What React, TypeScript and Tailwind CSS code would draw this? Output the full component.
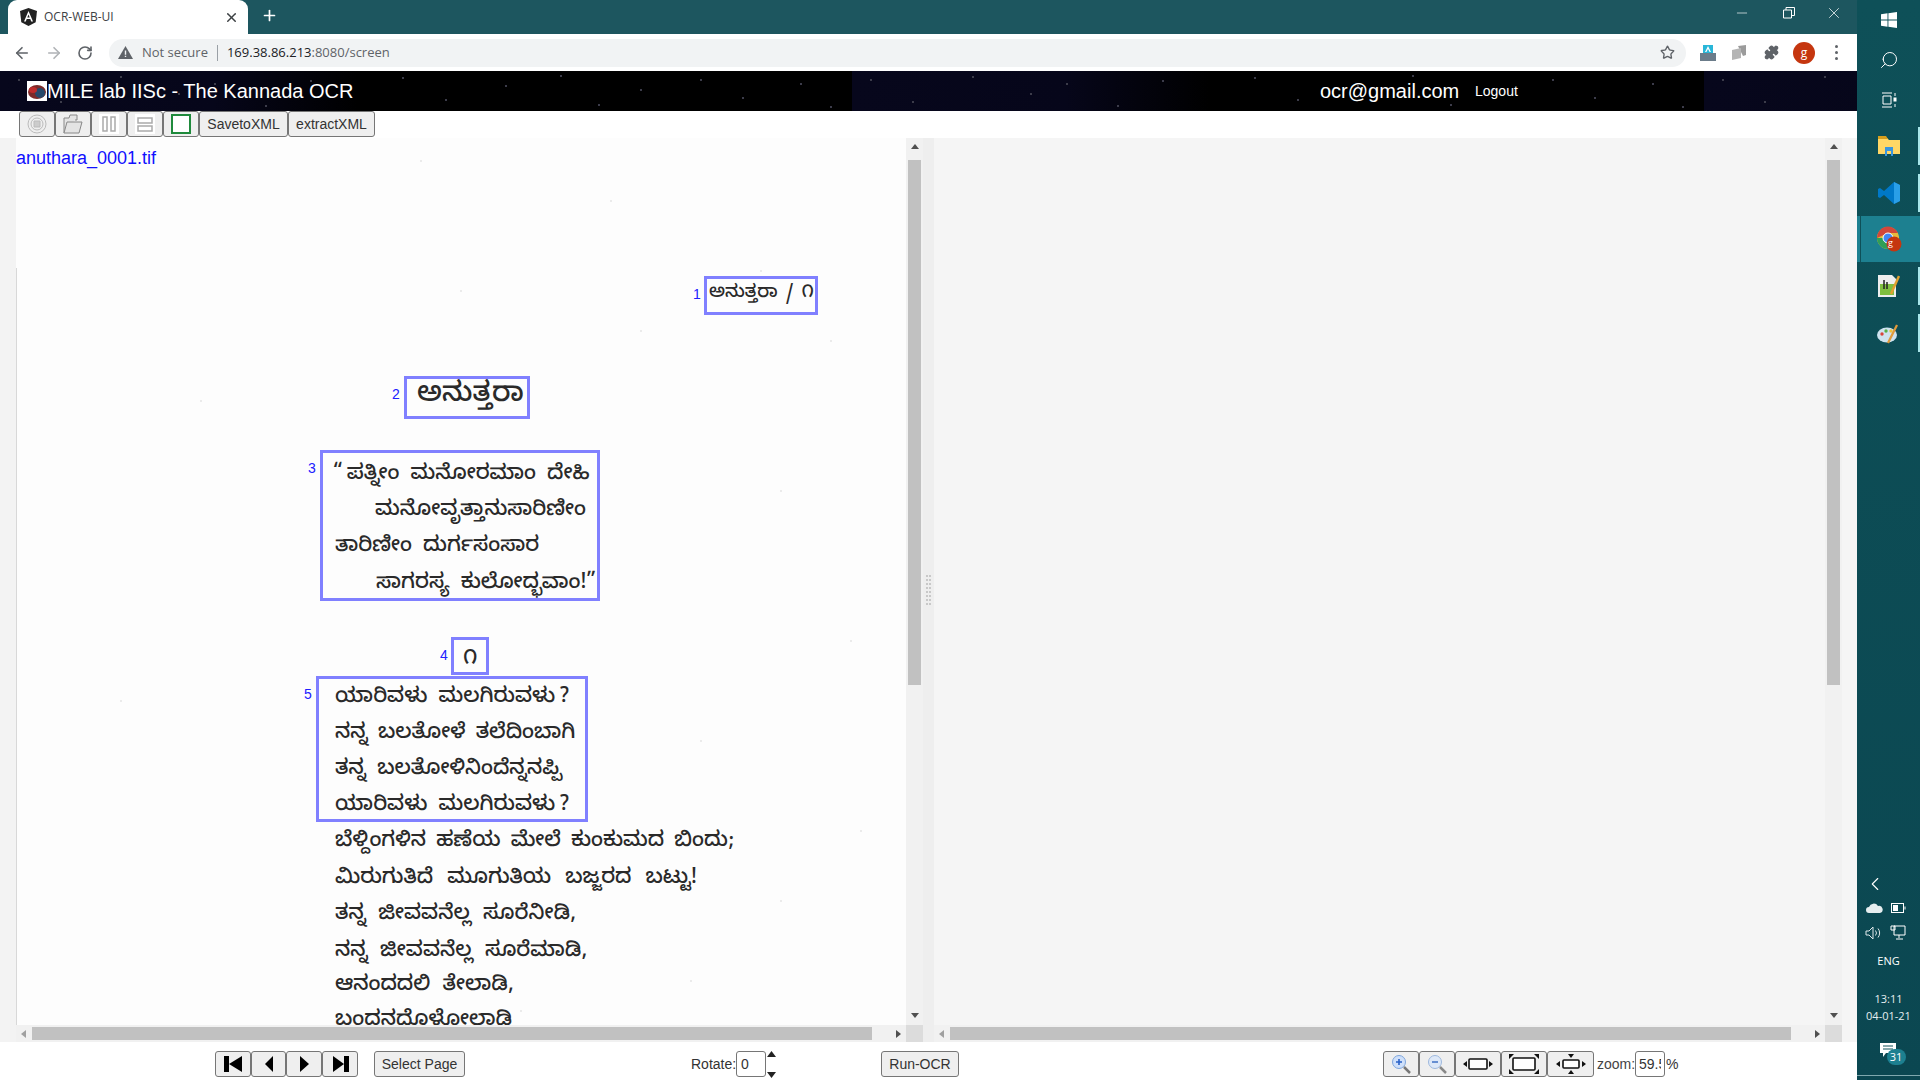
import type { ReactNode } from 'react';
import { ChevronLeft, Minus, Plus, RotateCw, Search, Star, X, ArrowLeft, ArrowRight, Puzzle } from 'lucide-react';

const pageLines = [
  { left: 709, y: 295, size: 18, gap: 2, text: 'ಅನುತ್ತರಾ / ೧' },
  { left: 417, y: 397, size: 28, gap: 0, text: 'ಅನುತ್ತರಾ' },
  { left: 333, y: 476, size: 21, gap: 5, text: '“\u2009ಪತ್ನೀಂ ಮನೋರಮಾಂ ದೇಹಿ' },
  { left: 375, y: 512, size: 21, gap: 0, text: 'ಮನೋವೃತ್ತಾನುಸಾರಿಣೀಂ' },
  { left: 335, y: 548, size: 21, gap: 5, text: 'ತಾರಿಣೀಂ ದುರ್ಗಸಂಸಾರ' },
  { left: 376, y: 585, size: 21, gap: 5, text: 'ಸಾಗರಸ್ಯ ಕುಲೋದ್ಭವಾಂ!”' },
  { left: 463, y: 661, size: 21, gap: 0, text: '೧' },
  { left: 335, y: 699, size: 21, gap: 5, text: 'ಯಾರಿವಳು ಮಲಗಿರುವಳು\u2009?' },
  { left: 335, y: 735, size: 21, gap: 4, text: 'ನನ್ನ ಬಲತೋಳೆ ತಲೆದಿಂಬಾಗಿ' },
  { left: 335, y: 771, size: 21, gap: 5, text: 'ತನ್ನ ಬಲತೋಳಿನಿಂದೆನ್ನನಪ್ಪಿ' },
  { left: 335, y: 807, size: 21, gap: 5, text: 'ಯಾರಿವಳು ಮಲಗಿರುವಳು\u2009?' },
  { left: 335, y: 843, size: 21, gap: 4, text: 'ಬೆಳ್ದಿಂಗಳಿನ ಹಣೆಯ ಮೇಲೆ ಕುಂಕುಮದ ಬಿಂದು;' },
  { left: 335, y: 880, size: 21, gap: 8, text: 'ಮಿರುಗುತಿದೆ ಮೂಗುತಿಯ ಬಜ್ಜರದ ಬಟ್ಟು!' },
  { left: 335, y: 916, size: 21, gap: 6, text: 'ತನ್ನ ಜೀವವನೆಲ್ಲ ಸೂರೆನೀಡಿ,' },
  { left: 335, y: 953, size: 21, gap: 6, text: 'ನನ್ನ ಜೀವವನೆಲ್ಲ ಸೂರೆಮಾಡಿ,' },
  { left: 335, y: 987, size: 21, gap: 6, text: 'ಆನಂದದಲಿ ತೇಲಾಡಿ,' },
  { left: 335, y: 1022, size: 21, gap: 6, text: 'ಬಂದನದೊಳೋಲಾಡಿ' },
];

const boxes = [
  { n: 1, x: 704, y: 276, w: 114, h: 39, lx: 693, ly: 294 },
  { n: 2, x: 404, y: 376, w: 126, h: 43, lx: 392, ly: 394 },
  { n: 3, x: 320, y: 450, w: 280, h: 151, lx: 308, ly: 468 },
  { n: 4, x: 451, y: 637, w: 38, h: 38, lx: 440, ly: 655 },
  { n: 5, x: 316, y: 676, w: 272, h: 146, lx: 304, ly: 694 },
];

const specks = [
  [420, 160], [610, 200], [760, 270], [830, 340], [780, 490], [640, 330], [460, 290], [850, 640], [700, 740], [780, 900], [690, 980], [520, 1010], [200, 400], [120, 700], [860, 830],
];

// stars of the header picture, one 852px tile
const stars = [
  [18, 8], [60, 30], [120, 5], [178, 22], [214, 12], [265, 34], [310, 9], [402, 6], [445, 28], [505, 14], [560, 4], [598, 33], [640, 18], [700, 8], [742, 26], [800, 12], [830, 35],
];

function GrayButton({ className, children }: { className: string; children: ReactNode }) {
  return (
    <button className={`flex h-[26px] shrink-0 items-center justify-center rounded-[3px] border border-[#767676] bg-[#efefef] text-[14px] text-[#333] ${className}`}>
      {children}
    </button>
  );
}

function VScroll() {
  return (
    <div className="flex w-[17px] shrink-0 flex-col items-center bg-[#f1f1f1]">
      <svg className="mt-[6px] h-[5px] w-[8px]" viewBox="0 0 8 5"><path d="M4 0l4 5H0z" fill="#505050" /></svg>
      <div className="mt-[11px] h-[525px] w-[13px] bg-[#c1c1c1]" />
      <div className="flex-1" />
      <svg className="mb-[7px] h-[5px] w-[8px]" viewBox="0 0 8 5"><path d="M4 5L0 0h8z" fill="#505050" /></svg>
    </div>
  );
}

function HScroll({ thumb }: { thumb: string }) {
  return (
    <div className="flex h-[17px] min-w-0 flex-1 items-center bg-[#f1f1f1]">
      <svg className="ml-[5px] h-[8px] w-[5px]" viewBox="0 0 5 8"><path d="M0 4l5-4v8z" fill="#a0a0a0" /></svg>
      <div className={`ml-[6px] h-[13px] bg-[#c1c1c1] ${thumb}`} />
      <div className="flex-1" />
      <svg className="mr-[5px] h-[8px] w-[5px]" viewBox="0 0 5 8"><path d="M5 4L0 0v8z" fill="#505050" /></svg>
    </div>
  );
}

function ChromeBar() {
  return (
    <>
      <div className="flex h-[34px] items-end bg-[#1d565f]">
        <div className="ml-[8px] flex h-[34px] w-[240px] items-center rounded-t-[9px] bg-white pl-[12px] pr-[8px]">
          <svg className="h-[18px] w-[17px]" viewBox="0 0 17 18">
            <path d="M8.5 0L17 3l-1.3 11.2L8.5 18l-7.2-3.8L0 3z" fill="#222" />
            <path d="M8.5 3L4 13.5h1.8l.9-2.4h3.6l.9 2.4H13zM7.3 9.600l1.2-3.2 1.2 3.2z" fill="#fff" />
          </svg>
          <span className="ml-[7px] flex-1 font-['Open_Sans',sans-serif] text-[12px] text-[#3c4043]">OCR-WEB-UI</span>
          <X className="mr-[1px] h-[15px] w-[15px] text-[#3c4043]" strokeWidth={2.4} />
        </div>
        <Plus className="mb-[10px] ml-[13px] h-[17px] w-[17px] text-white" strokeWidth={2.4} />
        <div className="flex-1" />
        <div className="mb-[12px] flex items-center">
          <Minus className="h-[16px] w-[16px] text-white" strokeWidth={1} />
          <svg className="ml-[33px] h-[12px] w-[12px]" viewBox="0 0 12 12" fill="none" stroke="#fff"><path d="M.5 3h8v8h-8zM3 3V.5h8.500v8H9" /></svg>
          <X className="ml-[30px] mr-[14px] h-[18px] w-[18px] text-white" strokeWidth={1} />
        </div>
      </div>
      <div className="flex h-[37px] items-center bg-white">
        <ArrowLeft className="ml-[13px] h-[18px] w-[18px] text-[#5f6368]" strokeWidth={2.2} />
        <ArrowRight className="ml-[14px] h-[18px] w-[18px] text-[#b0b3b6]" strokeWidth={2.2} />
        <RotateCw className="ml-[14px] h-[16px] w-[16px] text-[#5f6368]" strokeWidth={2.4} />
        <div className="ml-[16px] flex h-[28px] w-[1577px] items-center rounded-full bg-[#f1f3f4] pl-[9px] font-['Open_Sans',sans-serif] text-[13px]">
          <svg className="h-[13px] w-[15px]" viewBox="0 0 15 13"><path d="M7.500 0L15 13H0z" fill="#5f6368" /><path d="M6.800 4.500h1.400v4.200H6.800zM6.800 9.700h1.400v1.400H6.800z" fill="#f1f3f4" /></svg>
          <span className="ml-[9px] text-[#5f6368]">Not secure</span>
          <span className="ml-[9px] h-[16px] w-px bg-[#9aa0a6]" />
          <span className="ml-[9px] text-[#202124]">169.38.86.213<span className="text-[#5f6368]">:8080/screen</span></span>
          <div className="flex-1" />
          <Star className="mr-[11px] h-[15px] w-[15px] text-[#5f6368]" strokeWidth={2.2} />
        </div>
        <svg className="ml-[14px] h-[16px] w-[16px]" viewBox="0 0 16 16">
          <path d="M3 0h10v8H3z" fill="#29b6d8" /><path d="M0 8h16v8H0z" fill="#6b7c8a" /><path d="M8 1L5 7h1.400l1.600-3 1.600 3H11z" fill="#fff" />
        </svg>
        <svg className="ml-[16px] h-[15px] w-[15px]" viewBox="0 0 15 15">
          <path d="M6 1l8-1v10l-3 1z" fill="#9b9b9b" /><path d="M0 5l9-2v10l-9 2z" fill="#b5b5b5" />
        </svg>
        <Puzzle className="ml-[17px] h-[15px] w-[15px] fill-[#5f6368] text-[#5f6368]" />
        <div className="ml-[14px] flex h-[22px] w-[22px] items-center justify-center rounded-full bg-[#c5360f] font-['Open_Sans',sans-serif] text-[12px] text-white">g</div>
        <div className="ml-[20px] flex flex-col gap-[3px]">
          <span className="h-[3px] w-[3px] rounded-full bg-[#5f6368]" />
          <span className="h-[3px] w-[3px] rounded-full bg-[#5f6368]" />
          <span className="h-[3px] w-[3px] rounded-full bg-[#5f6368]" />
        </div>
      </div>
    </>
  );
}

function AppHeader() {
  return (
    <div className="relative flex h-[40px] items-center overflow-hidden bg-black bg-[linear-gradient(90deg,#07071c,#06061a_25%,#000_42%,#000)] bg-[length:852px_100%] font-['Liberation_Sans',sans-serif] text-white">
      {[0, 852, 1704].map((tile) =>
        stars.map(([x, y], i) => (
          <span key={`${tile}-${i}`} className="absolute h-[2px] w-[2px] bg-[#3c3c4a]" style={{ left: tile + x, top: y }} />
        )),
      )}
      <div className="relative ml-[27px] h-[20px] w-[20px] bg-white">
        <svg className="h-[20px] w-[20px]" viewBox="0 0 20 20">
          <ellipse cx="10" cy="11" rx="9" ry="7" fill="#7c2a2a" />
          <ellipse cx="13" cy="12" rx="5" ry="5" fill="#27496b" />
          <ellipse cx="6" cy="9" rx="4" ry="3" fill="#c02c2c" />
        </svg>
      </div>
      <span className="relative w-[305px] whitespace-nowrap text-[20px]">MILE lab IISc - The Kannada OCR</span>
      <span className="relative ml-[968px] w-[155px] whitespace-nowrap text-[20px]">ocr@gmail.com</span>
      <span className="relative whitespace-nowrap text-[14px]">Logout</span>
    </div>
  );
}

function Toolbar() {
  return (
    <div className="flex h-[27px] bg-white pl-[19px] font-['Liberation_Sans',sans-serif]">
      <GrayButton className="w-[36px]">
        <svg className="h-[20px] w-[20px]" viewBox="0 0 20 20" fill="none" stroke="#bbb"><circle cx="10" cy="10" r="9" /><circle cx="10" cy="10" r="6" /><path d="M7 7h6v6H7z" fill="#ccc" /></svg>
      </GrayButton>
      <GrayButton className="w-[36px]">
        <svg className="h-[20px] w-[20px]" viewBox="0 0 20 20" fill="#e4e4e4" stroke="#888"><path d="M1 19V4h5l1-3h7v5h-2" /><path d="M1 19l3-11h15l-3 11z" /></svg>
      </GrayButton>
      <GrayButton className="w-[36px]">
        <svg className="h-[20px] w-[20px]" viewBox="0 0 20 20"><rect width="20" height="20" fill="#fff" /><path d="M4 3h4v14H4zM12 3h4v14h-4z" fill="none" stroke="#aaa" strokeWidth="1.5" /></svg>
      </GrayButton>
      <GrayButton className="w-[36px]">
        <svg className="h-[20px] w-[20px]" viewBox="0 0 20 20"><rect width="20" height="20" fill="#fff" /><path d="M3 4h14v5H3zM3 12h14v5H3z" fill="none" stroke="#aaa" strokeWidth="1.5" /></svg>
      </GrayButton>
      <GrayButton className="w-[36px]">
        <div className="h-[20px] w-[20px] border-2 border-[#1f8a3c] bg-white" />
      </GrayButton>
      <GrayButton className="w-[89px]">SavetoXML</GrayButton>
      <GrayButton className="w-[87px]">extractXML</GrayButton>
    </div>
  );
}

function PagePanel() {
  return (
    <div className="flex w-[923px] shrink-0 flex-col">
      <div className="flex min-h-0 flex-1">
        <div className="w-[16px] shrink-0 bg-[#f3f3f3]" />
        <div className="relative min-w-0 flex-1 overflow-hidden bg-[#fdfdfd]">
          <div className="absolute left-0 top-[130px] h-[800px] w-px bg-[#d8d8d8]" />
          <div className="pt-[10px] font-['Liberation_Sans',sans-serif] text-[18px] leading-[20px] text-[#1010ff]">anuthara_0001.tif</div>
          {specks.map(([x, y], i) => (
            <span key={i} className="absolute h-[2px] w-[2px] rounded-full bg-[#e4e4e4]" style={{ left: x - 16, top: y - 138 }} />
          ))}
          {pageLines.map((l, i) => (
            <div
              key={i}
              className="absolute whitespace-nowrap font-['Noto_Sans_Kannada','Noto_Sans',sans-serif] font-medium leading-none text-[#2a2a2a]"
              style={{ left: l.left - 16, top: l.y - 138 - l.size / 2, fontSize: l.size, wordSpacing: l.gap }}
            >
              {l.text}
            </div>
          ))}
          {boxes.map((b) => (
            <div key={b.n}>
              <div className="absolute border-[3px] border-[#8080ff]" style={{ left: b.x - 16, top: b.y - 138, width: b.w, height: b.h }} />
              <span className="absolute font-['Liberation_Sans',sans-serif] text-[14px] leading-none text-[#2020ff]" style={{ left: b.lx - 16, top: b.ly - 138 - 7 }}>{b.n}</span>
            </div>
          ))}
        </div>
        <VScroll />
      </div>
      <div className="flex h-[17px] shrink-0">
        <div className="w-[16px] shrink-0 bg-[#f3f3f3]" />
        <HScroll thumb="w-[840px]" />
        <div className="w-[17px] shrink-0 bg-[#dcdcdc]" />
      </div>
    </div>
  );
}

function ResultPanel() {
  return (
    <div className="flex flex-1">
      <div className="flex w-[11px] shrink-0 items-center justify-center bg-[#eeeeee]">
        <div className="grid grid-cols-2 gap-x-[1px] gap-y-[2px]">
          {Array.from({ length: 16 }, (_, i) => (
            <span key={i} className="h-[2px] w-[2px] bg-[#c8c8c8]" />
          ))}
        </div>
      </div>
      <div className="flex w-[908px] shrink-0 flex-col">
        <div className="flex min-h-0 flex-1">
          <div className="flex-1 bg-[#f5f5f5]" />
          <VScroll />
        </div>
        <div className="flex h-[17px] shrink-0">
          <HScroll thumb="w-[841px]" />
          <div className="w-[17px] shrink-0 bg-[#dcdcdc]" />
        </div>
      </div>
      <div className="flex-1 bg-[#f5f5f5]" />
    </div>
  );
}

function PagerIcon({ d }: { d: string }) {
  return <svg className="h-[18px] w-[18px]" viewBox="0 0 18 18"><path d={d} fill="#000" /></svg>;
}

function BottomBar() {
  return (
    <div className="flex h-[38px] items-start bg-white pl-[215px] pt-[9px] font-['Liberation_Sans',sans-serif] text-[14px] leading-[26px] text-[#333]">
      <GrayButton className="w-[36px]"><PagerIcon d="M0 1h5v16H0zM5 9l13-8v16z" /></GrayButton>
      <GrayButton className="w-[35px]"><PagerIcon d="M5 9l8-8v16z" /></GrayButton>
      <GrayButton className="w-[36px]"><PagerIcon d="M14 9L5 1v16z" /></GrayButton>
      <GrayButton className="w-[36px]"><PagerIcon d="M18 1h-5v16h5zM13 9L2 1v16z" /></GrayButton>
      <GrayButton className="ml-[16px] w-[91px]">Select Page</GrayButton>
      <span className="ml-[226px] w-[45px]">Rotate:</span>
      <div className="flex h-[26px] w-[30px] items-center rounded-[3px] border border-[#767676] bg-white pl-[4px]">0</div>
      <div className="flex h-[27px] w-[8px] flex-col justify-between pl-[1px]">
        <svg className="h-[6px] w-[9px]" viewBox="0 0 9 6"><path d="M4.500 0L9 6H0z" fill="#222" /></svg>
        <svg className="h-[6px] w-[9px]" viewBox="0 0 9 6"><path d="M4.500 6L0 0h9z" fill="#222" /></svg>
      </div>
      <GrayButton className="ml-[107px] w-[78px]">Run-OCR</GrayButton>
      <GrayButton className="ml-[424px] w-[36px]">
        <svg className="h-[20px] w-[20px]" viewBox="0 0 20 20"><circle cx="8" cy="8" r="6.500" fill="#cfe0fa" stroke="#7fa6dc" /><path d="M5 8h6M8 5v6" stroke="#2a62c8" strokeWidth="1.6" /><path d="M13 13l6 6" stroke="#777" strokeWidth="2.5" /></svg>
      </GrayButton>
      <GrayButton className="w-[36px]">
        <svg className="h-[20px] w-[20px]" viewBox="0 0 20 20"><circle cx="8" cy="8" r="6.500" fill="#dde8f8" stroke="#9db8de" /><path d="M5 8h6" stroke="#4a78c8" strokeWidth="1.6" /><path d="M13 13l6 6" stroke="#888" strokeWidth="2.5" /></svg>
      </GrayButton>
      <GrayButton className="w-[46px]">
        <svg className="h-[14px] w-[30px]" viewBox="0 0 30 14"><rect x="6" y="2" width="18" height="10" rx="1" fill="#fff" stroke="#111" strokeWidth="1.6" /><path d="M0 7l4-3v6zM30 7l-4-3v6z" fill="#111" /></svg>
      </GrayButton>
      <GrayButton className="w-[46px]">
        <svg className="h-[20px] w-[30px]" viewBox="0 0 30 20"><rect x="4" y="4" width="22" height="12" rx="1" fill="#fff" stroke="#111" strokeWidth="1.6" /><path d="M0 0h5L0 5zM30 0h-5l5 5zM0 20h5l-5-5zM30 20h-5l5-5z" fill="#111" /></svg>
      </GrayButton>
      <GrayButton className="w-[47px]">
        <svg className="h-[20px] w-[30px]" viewBox="0 0 30 20"><rect x="7" y="6" width="16" height="8" rx="1" fill="#fff" stroke="#111" strokeWidth="1.6" /><path d="M0 10l4-3v6zM30 10l-4-3v6zM15 4l-3-4h6zM15 16l-3 4h6z" fill="#111" /></svg>
      </GrayButton>
      <span className="ml-[3px] w-[38px] text-[#444]">zoom:</span>
      <div className="h-[26px] w-[30px] overflow-hidden rounded-[3px] border border-[#767676] bg-white pl-[3px] leading-[24px]">
        <div className="w-[22px] overflow-hidden whitespace-nowrap">59.5</div>
      </div>
      <span className="ml-[1px]">%</span>
    </div>
  );
}

function Taskbar() {
  return (
    <aside className="flex w-[63px] shrink-0 flex-col items-center bg-gradient-to-b from-[#0e5058] to-[#0b4751] text-white">
      <svg className="mt-[12px] h-[16px] w-[16px]" viewBox="0 0 16 16" fill="#fff"><path d="M0 2.200l6.500-.9v6.200H0zM7.400 1.200L16 0v7.500H7.400zM0 8.400h6.500v6.300L0 13.800zM7.400 8.400H16V16l-8.600-1.200z" /></svg>
      <Search className="mt-[22px] h-[20px] w-[20px] -scale-x-100" strokeWidth={1.2} />
      <svg className="mt-[22px] h-[16px] w-[16px]" viewBox="0 0 16 16" fill="none" stroke="#fff"><path d="M1 1h10M1 15h10M2 4h8v8H2zM14 1v3M14 12v3" /><rect x="13" y="6" width="2" height="3" fill="#fff" /></svg>
      <div className="relative mt-[14px] flex h-[47px] w-full items-center justify-center">
        <svg className="h-[20px] w-[22px]" viewBox="0 0 22 20"><path d="M0 2h9l2 2h11v14H0z" fill="#ffd766" /><path d="M0 0h8l2 3H0z" fill="#d69e1d" /><path d="M7 11h8v9h-2v-5H9v5H7z" fill="#3a96dd" /></svg>
        <span className="absolute right-0 top-[5px] h-[38px] w-[2px] bg-[#a8e6ea]" />
      </div>
      <div className="relative flex h-[47px] w-full items-center justify-center">
        <svg className="h-[24px] w-[24px]" viewBox="0 0 24 24"><path d="M17 1l6 3v16l-6 3L7 14l-4 3-2-1v-8l2-1 4 3z" fill="#0078c8" /><path d="M17 1l6 3v16l-6 3z" fill="#2a9fe8" /></svg>
        <span className="absolute right-0 top-[5px] h-[38px] w-[2px] bg-[#a8e6ea]" />
      </div>
      <div className="relative flex h-[46px] w-full items-center justify-center bg-[#1d8090]">
        <span className="absolute left-[3px] top-0 h-full w-px bg-[#0e5058]" />
        <svg className="h-[26px] w-[26px]" viewBox="0 0 26 26"><circle cx="12" cy="12" r="11" fill="#e8b93c" /><path d="M12 12L1 12a11 11 0 0 0 11 11z" fill="#2f9e57" /><path d="M1 12A11 11 0 0 1 22 7H12z" fill="#d2473a" /><circle cx="12" cy="12" r="5" fill="#4285f4" stroke="#fff" /><circle cx="18" cy="18" r="7.500" fill="#c5360f" /></svg>
        <span className="absolute left-[31px] top-[22px] font-['Open_Sans',sans-serif] text-[9px] leading-none">g</span>
      </div>
      <div className="relative flex h-[47px] w-full items-center justify-center">
        <svg className="h-[24px] w-[22px]" viewBox="0 0 22 24"><path d="M0 1h14l4 4v18H0z" fill="#eee" /><path d="M2 10h14v11H2z" fill="#7fbf3f" /><path d="M6 6v9M9 8v7" stroke="#222" strokeWidth="1.5" /><path d="M13 20l8-18" stroke="#e0a030" strokeWidth="2.5" /></svg>
        <span className="absolute right-0 top-[5px] h-[38px] w-[2px] bg-[#a8e6ea]" />
      </div>
      <div className="relative flex h-[47px] w-full items-center justify-center">
        <svg className="h-[24px] w-[24px]" viewBox="0 0 24 24"><ellipse cx="10" cy="14" rx="10" ry="7.500" fill="#cfe3ef" /><circle cx="5" cy="13" r="1.700" fill="#d9453a" /><circle cx="9" cy="10" r="1.700" fill="#5ab04a" /><circle cx="14" cy="10" r="1.700" fill="#f0c23a" /><path d="M11 22l9-18" stroke="#e09a3a" strokeWidth="2.200" /></svg>
        <span className="absolute right-0 top-[5px] h-[38px] w-[2px] bg-[#a8e6ea]" />
      </div>
      <div className="flex-1" />
      <ChevronLeft className="mr-[28px] h-[22px] w-[22px]" strokeWidth={1.2} />
      <div className="mr-[6px] mt-[8px] flex items-center gap-[8px]">
        <svg className="h-[10px] w-[17px]" viewBox="0 0 17 10"><path d="M3 10a3 3 0 0 1 0-6 5 5 0 0 1 9-1 3.500 3.500 0 0 1 2 7z" fill="#e6eef0" /></svg>
        <svg className="h-[10px] w-[15px]" viewBox="0 0 15 10" fill="none" stroke="#fff"><rect x=".5" y=".5" width="12" height="9" /><rect x="2" y="2" width="5" height="6" fill="#fff" stroke="none" /><path d="M14 3.500v3" /></svg>
      </div>
      <div className="mr-[6px] mt-[12px] flex items-center gap-[8px]">
        <svg className="h-[14px] w-[17px]" viewBox="0 0 17 14" fill="none" stroke="#dfe8ea"><path d="M1 5h3l4-4v12L4 9H1zM10.500 4.500a4 4 0 0 1 0 5M13 2.500a7 7 0 0 1 0 9" /></svg>
        <svg className="h-[15px] w-[16px]" viewBox="0 0 16 15" fill="none" stroke="#fff"><path d="M4 1h11v9H4zM9 10v3M6 14h7M1 1h4v4H1z" /></svg>
      </div>
      <div className="mt-[14px] font-['Open_Sans',sans-serif] text-[11px] leading-[14px]">ENG</div>
      <div className="mt-[22px] text-center font-['Open_Sans',sans-serif] text-[11px] leading-[17px] text-[#e5eef0]">
        13:11
        <br />
        04-01-21
      </div>
      <div className="relative mt-[19px] h-[20px] w-[30px]">
        <svg className="absolute left-[6px] top-0 h-[14px] w-[16px]" viewBox="0 0 16 14"><path d="M0 0h16v10H6l-3 4v-4H0z" fill="#fff" /><path d="M3 3h10M3 6h10" stroke="#0e5058" /></svg>
        <span className="absolute left-[13px] top-[6px] flex h-[16px] w-[19px] items-center justify-center rounded-full bg-[#1d8090] font-['Open_Sans',sans-serif] text-[11px]">31</span>
      </div>
      <div className="mb-[4px] mt-[12px] h-px w-full bg-[#7fa8ae]" />
    </aside>
  );
}

export default function App() {
  return (
    <div className="relative flex h-[1080px] w-[1920px] overflow-hidden bg-white">
      <div className="flex w-[1857px] shrink-0 flex-col">
        <ChromeBar />
        <AppHeader />
        <Toolbar />
        <div className="flex h-[904px] shrink-0 bg-white">
          <PagePanel />
          <ResultPanel />
        </div>
        <BottomBar />
      </div>
      <Taskbar />
    </div>
  );
}
